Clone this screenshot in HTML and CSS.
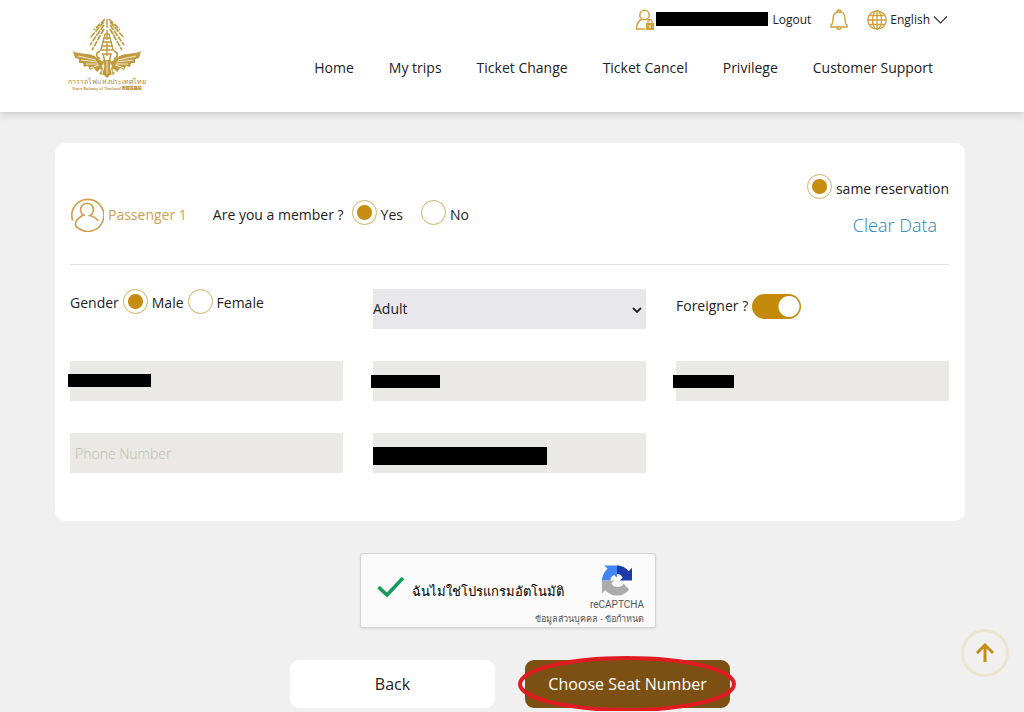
FILE: index.html
```html
<!DOCTYPE html>
<html lang="en">
<head>
<meta charset="utf-8">
<meta name="viewport" content="width=device-width, initial-scale=1">
<title>Passenger details</title>
<link rel="stylesheet" href="styles.css">
</head>
<body>
<header class="header">
  <a class="logo" href="#" aria-label="State Railway of Thailand">
    <svg class="logo-mark" viewBox="0 0 74 60" aria-hidden="true">
      <g fill="none" stroke="#c09a3e" stroke-width="1.7">
        <path d="M35 1 24 12M34 4 20 20M34 7 20 27M34 11 22 32M39 1 50 12M40 4 54 20M40 7 54 27M40 11 52 32" stroke-dasharray="6 1"/>
        <path d="M37 1v9" stroke-width="1.400"/>
        <path d="M37 12v10M35 16h4M34 20h6M32 24h10M31 28h12M30 32h14M35 16l-4 16M39 16l4 16M37 24v14" stroke-width="1.400"/>
        <path d="M30 33c-5 2-4 6 0 8M44 33c5 2 4 6 0 8M33 36h8l-2 8h-4z" stroke-width="1.600"/>
      </g>
      <g fill="#c09a3e">
        <path d="M3 33c6 4 16 1 23 6 3 2 5 4 8 5l-2 4 2 5-4-2-3 3-3-4-4 2-2-4-4 1-1-4-4 0 0-4-4-1z"/>
        <path d="M71 33c-6 4-16 1-23 6-3 2-5 4-8 5l2 4-2 5 4-2 3 3 3-4 4 2 2-4 4 1 1-4 4 0 0-4 4-1z"/>
        <path d="M33 42h8l-1 7 5 7-5 1-3 3-3-3-5-1 5-7z"/>
      </g>
      <path d="M8 38l18 4M11 42l16 2M16 46l12 0M20 50l9-3M66 38l-18 4M63 42l-16 2M58 46l-12 0M54 50l-9-3M37 43v13M34 48l-2 8M40 48l2 8" stroke="#fff" stroke-width=".8" fill="none"/>
    </svg>
    <span class="logo-thai" lang="th">การรถไฟแห่งประเทศไทย</span>
    <span class="logo-sub">State Railway of Thailand <b lang="zh">泰国铁路局</b></span>
  </a>
  <div class="header-main">
    <div class="tools">
      <svg class="user-icon" viewBox="0 0 20 22" aria-hidden="true"><g fill="none" stroke="#d0a03c" stroke-width="1.5"><circle cx="9.500" cy="6" r="4.700"/><path d="M7 10C3 12 1.500 15 1.500 20H10M12 10l3 2"/></g><path d="M11 14h8v7h-8z" fill="#d0a03c"/><path d="M13 14v-2c0-2 4-2 4 0v2" fill="none" stroke="#d0a03c" stroke-width="1.200"/><path d="M15 16v3" stroke="#fff"/></svg>
      <span class="account-name"></span>
      <a class="logout" href="#">Logout</a>
      <button class="icon-button bell" aria-label="Notifications"><svg viewBox="0 0 20 22" aria-hidden="true"><path d="M8 3a2 2 0 0 1 4 0M2 16c2-1 2-3 2-7 0-8 12-8 12 0 0 4 0 6 2 7v2H2zM8 18c0 3 4 3 4 0" fill="none" stroke="#cfa03a" stroke-width="1.400"/></svg></button>
      <button class="language"><svg class="globe" viewBox="0 0 20 20" aria-hidden="true"><g fill="none" stroke="#cfa03a" stroke-width="1.300"><circle cx="10" cy="10" r="9.200"/><ellipse cx="10" cy="10" rx="4.500" ry="9.200"/><path d="M10 1v18M1 10h18M2.500 5.500h15M2.500 14.500h15"/></g></svg>English<svg class="chevron" viewBox="0 0 14 8" aria-hidden="true"><path d="M.5.500 7 7 13.500.500" fill="none" stroke="#333" stroke-width="1.200"/></svg></button>
    </div>
    <nav class="nav">
      <a href="#">Home</a><a href="#">My trips</a><a href="#">Ticket Change</a><a href="#">Ticket Cancel</a><a href="#">Privilege</a><a href="#">Customer Support</a>
    </nav>
  </div>
</header>
<main class="page">
  <form class="booking">
    <section class="card">
      <div class="passenger">
        <svg class="avatar" viewBox="0 0 34 34" aria-hidden="true"><g fill="none" stroke="#d0a050" stroke-width="1.600" stroke-linecap="round"><path d="M2.500 22A16 16 0 1 1 8 30C4 28 5 23 9 20c2-2 4-2.500 5-3"/><path d="M14 17.500A6.500 6.500 0 1 1 20 17.500c4 1 6 2.500 8 5"/></g></svg>
        <h1 class="passenger-title">Passenger 1</h1>
        <fieldset class="choices member" aria-label="Membership">
          <span>Are you a member ?</span>
          <label class="choice"><input class="radio" type="radio" name="member" checked>Yes</label>
          <label class="choice choice-no"><input class="radio" type="radio" name="member">No</label>
        </fieldset>
        <div class="reservation">
          <label class="choice"><input class="radio" type="radio" name="same" checked>same reservation</label>
          <a class="clear" href="#">Clear Data</a>
        </div>
      </div>
      <div class="fields">
        <fieldset class="choices" aria-label="Gender">
          <span>Gender</span>
          <label class="choice"><input class="radio" type="radio" name="gender" checked>Male</label>
          <label class="choice"><input class="radio" type="radio" name="gender">Female</label>
        </fieldset>
        <div class="select-box">
          <select class="field select" aria-label="Passenger type"><option>Adult</option></select>
          <svg class="select-arrow" viewBox="0 0 10 6" aria-hidden="true"><path d="M1 1l4 4 4-4" fill="none" stroke="#222" stroke-width="1.800"/></svg>
        </div>
        <label class="foreigner">Foreigner ?<input class="switch" type="checkbox" role="switch" checked></label>
        <div class="redacted"><input class="field" aria-label="First name"><span class="bar bar-first"></span></div>
        <div class="redacted"><input class="field" aria-label="Last name"><span class="bar bar-last"></span></div>
        <div class="redacted"><input class="field" aria-label="Passport number"><span class="bar bar-passport"></span></div>
        <input class="field phone" type="tel" aria-label="Phone number" placeholder="Phone Number">
        <div class="redacted"><input class="field" type="email" aria-label="Email"><span class="bar bar-email"></span></div>
      </div>
    </section>
    <section class="captcha" lang="th">
      <svg class="check" viewBox="0 0 28 22" aria-hidden="true"><path d="M1.500 11 10 19 26 2" fill="none" stroke="#149a5b" stroke-width="3.600"/></svg>
      <span class="captcha-text">ฉันไม่ใช่โปรแกรมอัตโนมัติ</span>
      <div class="captcha-brand">
        <svg class="captcha-logo" viewBox="0 0 64 64" aria-hidden="true"><path d="M64 32V5l-7 7C51 5 42 0 32 0v18c6 0 10 3 12 8l-6 6z" fill="#1c3aa9"/><path d="M32 0H5l7 7C5 13 0 22 0 32h18c0-6 3-10 8-12l6 6z" fill="#4285f4"/><path d="M0 32v27l7-7c6 7 15 12 25 12 11 0 20-5 26-13L46 39c-3 5-7 7-14 7-6 0-10-3-12-8l6-6z" fill="#ababab"/></svg>
        <span class="captcha-name">reCAPTCHA</span>
        <small class="captcha-links"><a href="#">ข้อมูลส่วนบุคคล</a> - <a href="#">ข้อกำหนด</a></small>
      </div>
    </section>
    <div class="actions">
      <button class="button" type="button">Back</button>
      <div class="highlighted">
        <button class="button button-primary" type="button">Choose Seat Number</button>
        <svg class="highlight" viewBox="0 0 218 56" preserveAspectRatio="none" aria-hidden="true"><ellipse cx="109" cy="28" rx="107" ry="26" fill="none" stroke="#e11b22" stroke-width="4"/></svg>
      </div>
    </div>
  </form>
</main>
<a class="to-top" href="#" aria-label="Back to top"><svg viewBox="0 0 20 20" aria-hidden="true"><path d="M10 19V3M2 10l8-8 8 8" fill="none" stroke="#c38e17" stroke-width="3"/></svg></a>
</body>
</html>
```
FILE: styles.css
```css
* { box-sizing: border-box; }
body {
  margin: 0;
  background: #f0f0f0;
  color: #222;
  font: 14px/20px "Open Sans", "Noto Sans", sans-serif;
}
a { color: inherit; text-decoration: none; }
button, input, select { font: inherit; color: inherit; }
svg { display: block; flex: none; }
fieldset { margin: 0; padding: 0; border: 0; min-width: 0; }

.header {
  display: flex;
  justify-content: space-between;
  height: 112px;
  padding: 0 76px 0 70px;
  background: #fff;
  box-shadow: 0 2px 8px rgba(0, 0, 0, .18);
}
.logo { display: flex; flex-direction: column; align-items: center; width: 74px; padding-top: 18px; color: #b08a2e; white-space: nowrap; }
.logo-mark { width: 74px; height: 60px; }
.logo-thai { font-size: 7px; line-height: 8px; }
.logo-sub { font: 4px/6px "Open Sans", "Noto Sans CJK SC", sans-serif; font-weight: 600; }
.header-main { display: flex; flex-direction: column; align-items: flex-end; }
.tools { display: flex; align-items: center; height: 40px; font-size: 12px; }
.user-icon { width: 20px; height: 22px; }
.account-name { width: 112px; height: 14px; margin: 0 4px 2px 1px; background: #000; }
.icon-button, .language { display: flex; align-items: center; padding: 0; border: 0; background: none; }
.bell { margin: 0 18px; }
.bell svg { width: 20px; height: 22px; }
.language { gap: 3px; }
.globe { width: 20px; height: 20px; }
.chevron { width: 15px; height: 8px; }
.nav { display: flex; gap: 35px; padding: 18px 15px 0 0; }

.page { padding: 31px 59px 3px 55px; }
.card { padding: 0 16px 48px 15px; border-radius: 10px; background: #fff; }
.passenger { display: flex; align-items: center; height: 122px; border-bottom: 1px solid #e2e2e2; }
.avatar { width: 34px; height: 34px; margin-top: 22px; }
.passenger-title { margin: 22px 0 0 4px; color: #cda052; font: inherit; }
.choices { display: flex; align-items: center; gap: 4px; height: 28px; }
.choice { display: flex; align-items: center; gap: 4px; }
.member { margin: 22px 0 0 26px; gap: 8px; }
.choice-no { margin-left: 10px; }
.radio {
  appearance: none;
  width: 25px;
  height: 25px;
  margin: 0 0 4px;
  border: 1px solid #cdb263;
  border-radius: 50%;
  background: #fff;
}
.radio:checked { background: radial-gradient(circle, #c58d12 7px, #fff 8px); }
.reservation { display: flex; flex-direction: column; align-items: flex-end; gap: 10px; margin: 4px 0 0 auto; }
.clear { margin-right: 12px; color: #287fb8; font-weight: 300; font-size: 18px; line-height: 24px; }
.fields { display: grid; grid-template-columns: repeat(3, minmax(0, 1fr)); gap: 32px 30px; padding-top: 24px; }
.field { display: block; width: 100%; height: 40px; padding: 0 5px; border: 0; background: #eae9e5; }
.phone { font-weight: 300; }
.field::placeholder { color: #bdbdb8; opacity: 1; }
.select-box, .redacted, .highlighted { position: relative; }
.select { appearance: none; padding: 0; background: #e8e7eb; }
.select-arrow { position: absolute; right: 4px; top: 18px; width: 10px; height: 6px; }
.bar { position: absolute; height: 13px; background: #000; }
.bar-first { left: -2px; top: 13px; width: 83px; }
.bar-last { left: -2px; top: 14px; width: 69px; }
.bar-passport { left: -3px; top: 14px; width: 61px; }
.bar-email { left: 0; top: 14px; width: 174px; height: 18px; }
.foreigner { display: flex; align-items: center; gap: 4px; height: 34px; }
.switch {
  appearance: none;
  width: 49px;
  height: 25px;
  margin: 0;
  border-radius: 13px;
  background: radial-gradient(circle at 37px 50%, #fff 10px, #c48b0b 11px);
}

.captcha {
  display: flex;
  align-items: center;
  width: 296px;
  height: 75px;
  margin: 32px auto 0;
  padding: 0 11px 0 16px;
  border: 1px solid #d6d6d6;
  border-radius: 3px;
  background: #fafafa;
  box-shadow: 0 1px 2px rgba(0, 0, 0, .1);
  transform: translateX(-2px);
}
.check { width: 28px; height: 22px; margin-bottom: 8px; }
.captcha-text { margin-left: 7px; color: #000; font-size: 13px; font-weight: 500; white-space: nowrap; }
.captcha-brand { display: flex; flex: 1; flex-direction: column; align-items: flex-end; min-width: 0; padding-top: 8px; color: #555; white-space: nowrap; }
.captcha-logo { width: 30px; height: 31px; margin-right: 12px; }
.captcha-name { font: 10px/18px Roboto, sans-serif; }
.captcha-links { font: 9px/10px Roboto, "Noto Sans", sans-serif; }
.actions { display: flex; justify-content: center; gap: 30px; margin-top: 32px; }
.button { display: block; width: 205px; height: 48px; padding: 0; border: 0; border-radius: 9px; background: #fff; font-size: 16px; }
.button-primary { background: #7c4f13; color: #fff; }
.highlight { position: absolute; left: -7px; top: -4px; width: 218px; height: 56px; }
.to-top {
  position: fixed;
  right: 15px;
  bottom: 35px;
  display: grid;
  place-items: center;
  width: 48px;
  height: 48px;
  border: 3px solid #ebe5cf;
  border-radius: 50%;
}
.to-top svg { width: 20px; height: 20px; }
```
